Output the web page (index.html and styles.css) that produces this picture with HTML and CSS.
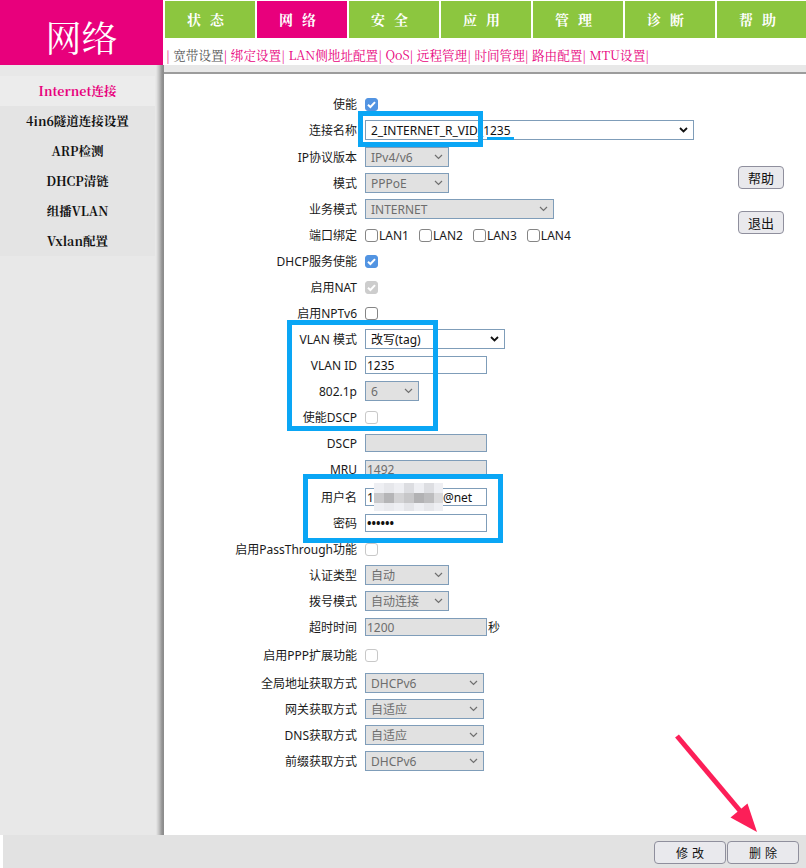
FILE: index.html
```html
<!DOCTYPE html>
<html lang="zh-CN">
<head>
<meta charset="utf-8">
<title>网络</title>
<link rel="stylesheet" href="styles.css">
</head>
<body>
<div class="page">
  <header class="top">
    <div class="logo">网络</div>
    <div class="navwrap">
      <ul class="tabs">
        <li>状态</li><li class="on">网络</li><li>安全</li><li>应用</li><li>管理</li><li>诊断</li><li>帮助</li>
      </ul>
      <div class="subnav">| <span class="cur">宽带设置</span>| 绑定设置| LAN侧地址配置| QoS| 远程管理| 时间管理| 路由配置| MTU设置|</div>
    </div>
  </header>
  <div class="main">
    <aside class="side">
      <ul class="menu">
        <li class="on">Internet连接</li>
        <li>4in6隧道连接设置</li>
        <li>ARP检测</li>
        <li>DHCP清链</li>
        <li>组播VLAN</li>
        <li>Vxlan配置</li>
      </ul>
    </aside>
    <section class="content">
      <div class="form">
        <div class="row"><span class="lab">使能</span><span class="cb on"><svg viewBox="0 0 10 10"><path d="M1.8 5.2L4 7.3L8.2 2.8"/></svg></span></div>
        <div class="row"><span class="lab">连接名称</span><div class="sel w329"><span>2_INTERNET_R_VID_1235</span><svg class="chev" viewBox="0 0 9 6"><path d="M1 1L4.5 4.5L8 1"/></svg></div></div>
        <div class="row g1"><span class="lab">IP协议版本</span><div class="sel dis w84"><span>IPv4/v6</span><svg class="chev" viewBox="0 0 9 6"><path d="M1 1L4.5 4.5L8 1"/></svg></div></div>
        <div class="row"><span class="lab">模式</span><div class="sel dis w84"><span>PPPoE</span><svg class="chev" viewBox="0 0 9 6"><path d="M1 1L4.5 4.5L8 1"/></svg></div></div>
        <div class="row"><span class="lab">业务模式</span><div class="sel dis w189"><span>INTERNET</span><svg class="chev" viewBox="0 0 9 6"><path d="M1 1L4.5 4.5L8 1"/></svg></div></div>
        <div class="row"><span class="lab">端口绑定</span>
          <div class="lans">
            <span class="lan"><span class="cb"></span>LAN1</span>
            <span class="lan"><span class="cb"></span>LAN2</span>
            <span class="lan"><span class="cb"></span>LAN3</span>
            <span class="lan"><span class="cb"></span>LAN4</span>
          </div>
        </div>
        <div class="row"><span class="lab">DHCP服务使能</span><span class="cb on"><svg viewBox="0 0 10 10"><path d="M1.8 5.2L4 7.3L8.2 2.8"/></svg></span></div>
        <div class="row"><span class="lab">启用NAT</span><span class="cb on dis"><svg viewBox="0 0 10 10"><path d="M1.8 5.2L4 7.3L8.2 2.8"/></svg></span></div>
        <div class="row"><span class="lab">启用NPTv6</span><span class="cb"></span></div>
        <div class="row"><span class="lab">VLAN 模式</span><div class="sel w140"><span>改写(tag)</span><svg class="chev" viewBox="0 0 9 6"><path d="M1 1L4.5 4.5L8 1"/></svg></div></div>
        <div class="row"><span class="lab">VLAN ID</span><div class="inp"><span>1235</span></div></div>
        <div class="row"><span class="lab">802.1p</span><div class="sel dis w54"><span>6</span><svg class="chev" viewBox="0 0 9 6"><path d="M1 1L4.5 4.5L8 1"/></svg></div></div>
        <div class="row"><span class="lab">使能DSCP</span><span class="cb dis"></span></div>
        <div class="row"><span class="lab">DSCP</span><div class="inp dis"></div></div>
        <div class="row"><span class="lab">MRU</span><div class="inp dis"><span>1492</span></div></div>
        <div class="row g2"><span class="lab">用户名</span><div class="inp"><span>1</span><span class="blur"><i></i><i></i><i></i><i></i><i></i><i></i><i></i><i></i><i></i><i></i><i></i><i></i><i></i><i></i><i></i><i></i><i></i><i></i><i></i><i></i><i></i></span><span>@net</span></div></div>
        <div class="row"><span class="lab">密码</span><div class="inp"><span class="dots">••••••</span></div></div>
        <div class="row"><span class="lab">启用PassThrough功能</span><span class="cb dis"></span></div>
        <div class="row"><span class="lab">认证类型</span><div class="sel dis w84"><span>自动</span><svg class="chev" viewBox="0 0 9 6"><path d="M1 1L4.5 4.5L8 1"/></svg></div></div>
        <div class="row"><span class="lab">拨号模式</span><div class="sel dis w84"><span>自动连接</span><svg class="chev" viewBox="0 0 9 6"><path d="M1 1L4.5 4.5L8 1"/></svg></div></div>
        <div class="row"><span class="lab">超时时间</span><div class="inp dis"><span>1200</span></div><span class="unit">秒</span></div>
        <div class="row g2"><span class="lab">启用PPP扩展功能</span><span class="cb dis"></span></div>
        <div class="row g2"><span class="lab">全局地址获取方式</span><div class="sel dis w119"><span>DHCPv6</span><svg class="chev" viewBox="0 0 9 6"><path d="M1 1L4.5 4.5L8 1"/></svg></div></div>
        <div class="row"><span class="lab">网关获取方式</span><div class="sel dis w119"><span>自适应</span><svg class="chev" viewBox="0 0 9 6"><path d="M1 1L4.5 4.5L8 1"/></svg></div></div>
        <div class="row"><span class="lab">DNS获取方式</span><div class="sel dis w119"><span>自适应</span><svg class="chev" viewBox="0 0 9 6"><path d="M1 1L4.5 4.5L8 1"/></svg></div></div>
        <div class="row"><span class="lab">前缀获取方式</span><div class="sel dis w119"><span>DHCPv6</span><svg class="chev" viewBox="0 0 9 6"><path d="M1 1L4.5 4.5L8 1"/></svg></div></div>
      </div>
      <div class="sidebtns">
        <button class="btn">帮助</button>
        <button class="btn">退出</button>
      </div>
      <div class="mark m1"></div>
      <div class="uline"></div>
      <div class="mark m2"></div>
      <div class="mark m3"></div>
    </section>
  </div>
  <footer class="bar">
    <button class="btn wide">修改</button>
    <button class="btn wide">删除</button>
  </footer>
  <svg class="arrow" viewBox="0 0 806 868">
    <line x1="677" y1="736" x2="741" y2="812"/>
    <polygon points="757,832 730.5,817.5 747.5,803.5"/>
  </svg>
</div>
</body>
</html>
```

FILE: styles.css
```css
html, body {
  margin: 0;
  padding: 0;
  background: #fff;
}
body {
  font-family: "Noto Sans", "Noto Sans CJK SC", sans-serif;
  font-size: 12px;
  color: #1a1a1a;
}
.page {
  position: relative;
  width: 806px;
  height: 868px;
  overflow: hidden;
  display: flex;
  flex-direction: column;
}

/* header */
.top {
  display: flex;
  height: 65px;
  flex: none;
  background: #fff;
}
.logo {
  width: 163px;
  flex: none;
  background: #e8007c;
  color: #fff;
  font-family: "Noto Serif CJK SC", "Liberation Serif", "Noto Sans CJK SC", serif;
  font-size: 36px;
  display: flex;
  align-items: center;
  justify-content: center;
  padding-top: 8px;
  box-sizing: border-box;
}
.navwrap {
  margin-left: 2px;
  flex: 1;
  min-width: 0;
}
.tabs {
  display: flex;
  gap: 2px;
  list-style: none;
  margin: 1px 0 0;
  padding: 0;
}
.tabs li {
  flex: none;
  width: 90px;
  height: 37px;
  background: #8cc63f;
  color: #fff;
  font-family: "Noto Serif CJK SC", "Liberation Serif", "Noto Sans CJK SC", serif;
  font-weight: bold;
  font-size: 14px;
  line-height: 37px;
  text-align: center;
  letter-spacing: 9px;
}
.tabs li.on {
  background: #e8007c;
}
.subnav {
  margin: 7px 0 0 1px;
  font-family: "Noto Serif CJK SC", "Liberation Serif", "Noto Sans CJK SC", serif;
  font-size: 12.6px;
  line-height: 20px;
  color: #e8007c;
  white-space: nowrap;
}
.subnav .cur {
  color: #555;
}

/* main */
.main {
  flex: 1;
  display: flex;
  min-height: 0;
  background: #e8e8e8;
}
.side {
  width: 164px;
  flex: none;
  padding-top: 11px;
  box-sizing: border-box;
  background: linear-gradient(to right, #e8e8e8 0, #e8e8e8 156px, #c4c4c4 159px, #939393 162px, #8a8a8a 164px);
}
.menu {
  list-style: none;
  margin: 0;
  padding: 0;
  width: 155px;
}
.menu li {
  height: 30px;
  line-height: 30px;
  text-align: center;
  font-family: "Noto Serif CJK SC", "Liberation Serif", "Noto Sans CJK SC", serif;
  font-weight: bold;
  font-size: 12.5px;
  color: #111;
  background: #e4e4e4;
}
.menu li.on {
  background: #ececec;
  color: #e8007c;
}
.content {
  flex: 1;
  margin-top: 7px;
  border-top: 2px solid #9c9c9c;
  background: #fff;
  position: relative;
  display: flex;
}
.form {
  flex: 1;
  padding-top: 17px;
}
.row {
  display: flex;
  align-items: center;
  height: 26px;
  white-space: nowrap;
}
.row.g1 { margin-top: 1px; }
.row.g2 { margin-top: 2px; }
.lab {
  width: 201px;
  flex: none;
  padding-right: 8px;
  box-sizing: border-box;
  text-align: right;
  color: #1a1a1a;
}

/* select */
.sel {
  box-sizing: border-box;
  height: 20px;
  border: 1px solid #7f9db9;
  background: #fff;
  color: #111;
  display: flex;
  align-items: center;
  justify-content: space-between;
  padding: 0 5px 0 5px;
  flex: none;
}
.sel.dis {
  background: #e1e1e1;
  color: #6d6d6d;
}
.w329 { width: 329px; }
.w189 { width: 189px; }
.w140 { width: 140px; }
.w119 { width: 119px; }
.w84 { width: 84px; }
.w54 { width: 54px; }
.chev {
  width: 9px;
  height: 6px;
  fill: none;
  stroke: #111;
  stroke-width: 1.8;
  flex: none;
}
.dis .chev {
  stroke: #707070;
  stroke-width: 1.2;
}

/* text input */
.inp {
  box-sizing: border-box;
  width: 122px;
  height: 18px;
  border: 1px solid #7f9db9;
  background: #fff;
  color: #111;
  padding: 0 1px;
  display: flex;
  align-items: center;
  flex: none;
}
.inp.dis {
  background: #e1e1e1;
  color: #6d6d6d;
}
.unit {
  margin-left: 1px;
}
.dots {
  font-weight: bold;
  letter-spacing: 0;
  color: #111;
}
.blur {
  display: grid;
  grid-template-columns: repeat(7, 10px);
  grid-template-rows: 10px 10px 8px;
  width: 69px;
  height: 28px;
  margin: -5px 0;
  flex: none;
  overflow: hidden;
}
.blur i { display: block; background: #eeeff3; }
.blur i:nth-child(2) { background: #e6e7eb; }
.blur i:nth-child(4) { background: #dcdde1; }
.blur i:nth-child(6) { background: #dddee2; }
.blur i:nth-child(8) { background: #c9c9cb; }
.blur i:nth-child(9) { background: #b5b5b7; }
.blur i:nth-child(10) { background: #d3d3d5; }
.blur i:nth-child(11) { background: #c7c7c9; }
.blur i:nth-child(12) { background: #b2b2b4; }
.blur i:nth-child(13) { background: #bdbdbf; }
.blur i:nth-child(14) { background: #dadadc; }
.blur i:nth-child(16) { background: #e9eaee; }
.blur i:nth-child(18) { background: #e4e5e9; }
.blur i:nth-child(20) { background: #e6e7eb; }

/* checkbox */
.cb {
  width: 13px;
  height: 13px;
  box-sizing: border-box;
  border: 1.5px solid #858585;
  border-radius: 3px;
  background: #fff;
  display: inline-flex;
  flex: none;
}
.cb.dis {
  border-color: #c8c8c8;
}
.cb.on {
  background: #5294e2;
  border-color: #5294e2;
}
.cb.on.dis {
  background: #cdcdcd;
  border-color: #cdcdcd;
}
.cb svg {
  width: 100%;
  height: 100%;
  fill: none;
  stroke: #fff;
  stroke-width: 1.8;
}
.lans {
  display: flex;
  align-items: center;
}
.lan {
  display: inline-flex;
  align-items: center;
  margin-right: 10px;
}
.lan .cb {
  margin-right: 1px;
}

/* buttons */
.btn {
  font-family: "Noto Sans CJK SC", sans-serif;
  font-size: 13px;
  color: #111;
  width: 46px;
  height: 23px;
  padding: 0;
  border: 1px solid #8f8f9d;
  border-radius: 4px;
  background: #e9e9ed;
  line-height: 1;
}
.sidebtns {
  display: flex;
  flex-direction: column;
  gap: 22px;
  padding: 92px 22px 0 0;
}
.bar {
  height: 33px;
  flex: none;
  margin-left: 3px;
  background: #e2e2e2;
  display: flex;
  justify-content: flex-end;
  align-items: flex-start;
  gap: 1px;
  padding: 6px 7px 0 0;
  box-sizing: border-box;
}
.btn.wide {
  width: 72px;
  font-size: 12px;
  letter-spacing: 4px;
  padding-left: 4px;
}

/* annotations */
.mark {
  position: absolute;
  border: 5px solid #0aa6f5;
  box-sizing: border-box;
}
.m1 { left: 194px; top: 37px; width: 125px; height: 36px; }
.m2 { left: 123px; top: 246px; width: 151px; height: 111px; }
.m3 { left: 139px; top: 400px; width: 200px; height: 69px; }
.uline {
  position: absolute;
  left: 323px;
  top: 63px;
  width: 27px;
  height: 3px;
  background: #0aa6f5;
}
.arrow {
  position: absolute;
  left: 0;
  top: 0;
  width: 806px;
  height: 868px;
  pointer-events: none;
}
.arrow line {
  stroke: #fc1f58;
  stroke-width: 5;
}
.arrow polygon {
  fill: #fc1f58;
}
```
